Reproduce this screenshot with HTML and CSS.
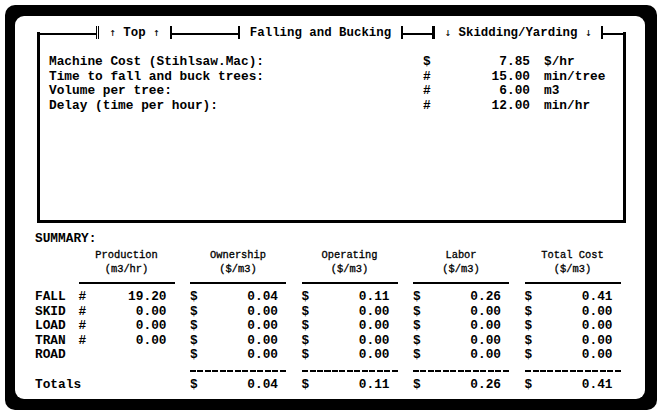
FILE: index.html
```html
<!DOCTYPE html>
<html lang="en">
<head>
    <meta charset="UTF-8" />
    <meta name="viewport" content="width=device-width, initial-scale=1" />
    <title>Falling and Bucking</title>
    <link rel="stylesheet" href="styles.css">
</head>
<body>
    <div class="screen">
        <div class="page">

            <div class="panel">
                <div class="tabs">
                    <span class="seg seg-lead"></span>
                    <span class="tick tick-double"></span>
                    <span class="tab tab-top"><span class="arrow">↑</span> Top <span class="arrow">↑</span></span>
                    <span class="tick"></span>
                    <span class="seg seg-mid"></span>
                    <span class="tick"></span>
                    <span class="tab tab-fall">Falling and Bucking</span>
                    <span class="tick"></span>
                    <span class="seg seg-short"></span>
                    <span class="tick tick-thick"></span>
                    <span class="tab tab-skid"><span class="arrow">↓</span> Skidding/Yarding <span class="arrow">↓</span></span>
                    <span class="tick"></span>
                    <span class="seg seg-fill"></span>
                </div>

                <div class="inputs">
                    <div class="input-row">
                        <span class="label">Machine Cost (Stihlsaw.Mac):</span>
                        <span class="sign">$</span>
                        <span class="value">7.85</span>
                        <span class="unit">$/hr</span>
                    </div>
                    <div class="input-row">
                        <span class="label">Time to fall and buck trees:</span>
                        <span class="sign">#</span>
                        <span class="value">15.00</span>
                        <span class="unit">min/tree</span>
                    </div>
                    <div class="input-row">
                        <span class="label">Volume per tree:</span>
                        <span class="sign">#</span>
                        <span class="value">6.00</span>
                        <span class="unit">m3</span>
                    </div>
                    <div class="input-row">
                        <span class="label">Delay (time per hour):</span>
                        <span class="sign">#</span>
                        <span class="value">12.00</span>
                        <span class="unit">min/hr</span>
                    </div>
                </div>
            </div>

            <div class="summary">
                <div class="summary-title">SUMMARY:</div>

                <div class="grid head-row">
                    <span></span>
                    <span class="head">Production<br>(m3/hr)</span>
                    <span class="head">Ownership<br>($/m3)</span>
                    <span class="head">Operating<br>($/m3)</span>
                    <span class="head">Labor<br>($/m3)</span>
                    <span class="head">Total Cost<br>($/m3)</span>
                </div>

                <div class="grid rule-row">
                    <span></span>
                    <span class="rule"></span>
                    <span class="rule"></span>
                    <span class="rule"></span>
                    <span class="rule"></span>
                    <span class="rule"></span>
                </div>

                <div class="grid data-row">
                    <span class="name">FALL</span>
                    <span class="cell"><span>#</span><span>19.20</span></span>
                    <span class="cell"><span>$</span><span>0.04</span></span>
                    <span class="cell"><span>$</span><span>0.11</span></span>
                    <span class="cell"><span>$</span><span>0.26</span></span>
                    <span class="cell"><span>$</span><span>0.41</span></span>
                </div>
                <div class="grid data-row">
                    <span class="name">SKID</span>
                    <span class="cell"><span>#</span><span>0.00</span></span>
                    <span class="cell"><span>$</span><span>0.00</span></span>
                    <span class="cell"><span>$</span><span>0.00</span></span>
                    <span class="cell"><span>$</span><span>0.00</span></span>
                    <span class="cell"><span>$</span><span>0.00</span></span>
                </div>
                <div class="grid data-row">
                    <span class="name">LOAD</span>
                    <span class="cell"><span>#</span><span>0.00</span></span>
                    <span class="cell"><span>$</span><span>0.00</span></span>
                    <span class="cell"><span>$</span><span>0.00</span></span>
                    <span class="cell"><span>$</span><span>0.00</span></span>
                    <span class="cell"><span>$</span><span>0.00</span></span>
                </div>
                <div class="grid data-row">
                    <span class="name">TRAN</span>
                    <span class="cell"><span>#</span><span>0.00</span></span>
                    <span class="cell"><span>$</span><span>0.00</span></span>
                    <span class="cell"><span>$</span><span>0.00</span></span>
                    <span class="cell"><span>$</span><span>0.00</span></span>
                    <span class="cell"><span>$</span><span>0.00</span></span>
                </div>
                <div class="grid data-row">
                    <span class="name">ROAD</span>
                    <span></span>
                    <span class="cell"><span>$</span><span>0.00</span></span>
                    <span class="cell"><span>$</span><span>0.00</span></span>
                    <span class="cell"><span>$</span><span>0.00</span></span>
                    <span class="cell"><span>$</span><span>0.00</span></span>
                </div>

                <div class="grid dash-row">
                    <span></span>
                    <span></span>
                    <span class="dashes"></span>
                    <span class="dashes"></span>
                    <span class="dashes"></span>
                    <span class="dashes"></span>
                </div>

                <div class="grid data-row">
                    <span class="name">Totals</span>
                    <span></span>
                    <span class="cell"><span>$</span><span>0.04</span></span>
                    <span class="cell"><span>$</span><span>0.11</span></span>
                    <span class="cell"><span>$</span><span>0.26</span></span>
                    <span class="cell"><span>$</span><span>0.41</span></span>
                </div>
            </div>

        </div>
    </div>
</body>
</html>
```

FILE: styles.css
```css
body {
    margin: 0;
    background: #fff;
    color: #000;
    font-family: "Liberation Mono", "DejaVu Sans Mono", monospace;
    font-size: 12.8px;
    font-weight: bold;
}

/* black bezel round the screen */
.screen {
    margin: 5px;
    width: 652px;
    height: 405px;
    box-sizing: border-box;
    padding: 11px 12px 11px 10px;
    background: #000;
    border-radius: 10px;
}
.page {
    height: 100%;
    box-sizing: border-box;
    background: #fff;
    border-radius: 9px;
    padding-top: 16px;
}

/* input panel with tab strip on top */
.panel {
    display: flow-root;
    margin: 0 19px 0 22px;
    height: 191px;
    box-sizing: border-box;
    border: 3px solid #000;
    border-top: none;
}
.tabs {
    display: flex;
    align-items: flex-start;
    height: 14px;
    margin: -6px -3px 0 -3px;
}
.seg {
    height: 2px;
    margin-top: 7px;
    background: #000;
}
.seg-lead { width: 59px; }
.seg-mid { width: 66px; }
.seg-short { width: 29px; }
.seg-fill { flex: 1; }
.tick {
    width: 2px;
    height: 13px;
    background: #000;
}
.tick-double {
    width: 1px;
    background: #fff;
    border-left: 1px solid #000;
    border-right: 1px solid #000;
}
.tick-thick { width: 3px; }
.tab {
    line-height: 14px;
    text-align: center;
    white-space: nowrap;
    font-size: 12.4px;
}
.tab-top { width: 71px; }
.tab-fall { width: 161px; }
.tab-skid { width: 166px; }
.arrow {
    font-family: "DejaVu Sans Mono", monospace;
    font-weight: normal;
    font-size: 11px;
    color: #000;
}

.inputs {
    padding: 15px 0 0 9px;
}
.input-row {
    display: flex;
    line-height: 14.5px;
    white-space: nowrap;
}
.input-row .label { width: 374px; }
.input-row .sign { width: 20px; }
.input-row .value {
    width: 87px;
    text-align: right;
}
.input-row .unit { margin-left: 14px; }

/* summary table */
.summary {
    margin-top: 9px;
    padding-left: 20px;
    line-height: 14.5px;
}
.grid {
    display: grid;
    grid-template-columns: 28px repeat(5, 96px);
    column-gap: 15.5px;
}
.head-row { padding-top: 1px; }
.head {
    text-align: center;
    font-weight: normal;
    font-size: 10.4px;
    white-space: nowrap;
    -webkit-text-stroke: 0.3px #000;
}
.rule-row {
    margin: 5.75px 0;
}
.rule {
    height: 2px;
    background: #000;
}
.name { white-space: nowrap; }
.cell {
    display: flex;
    justify-content: space-between;
    padding-right: 8px;
}
.dash-row { height: 15.5px; }
.dashes {
    height: 2px;
    margin-top: 7px;
    background: repeating-linear-gradient(90deg, #000 0 6px, transparent 6px 7.5px);
}
```
